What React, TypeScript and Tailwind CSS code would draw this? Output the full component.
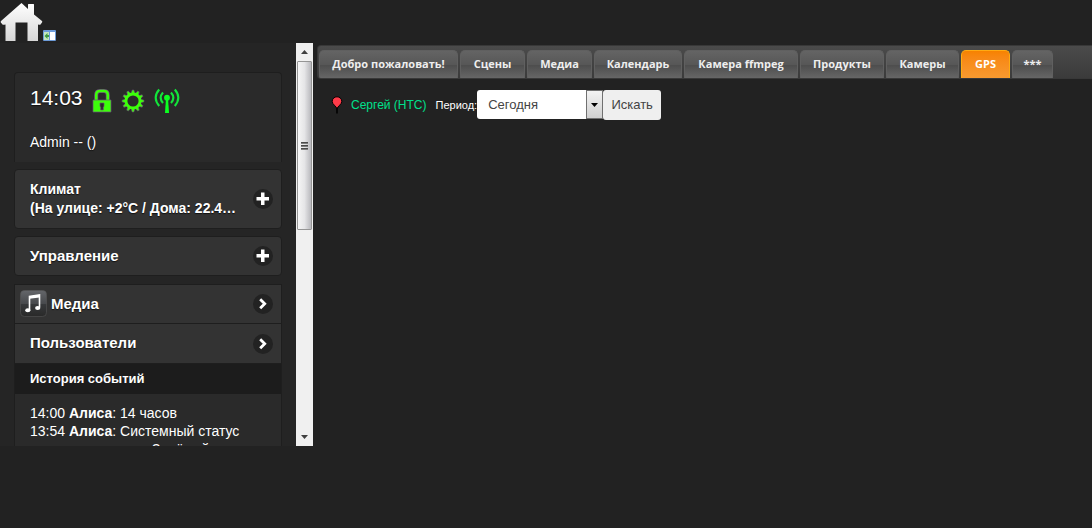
import React, { useState } from "react";

function HomeIcon() {
  return (
    <svg width="43" height="43" viewBox="0 0 43 43" aria-hidden="true">
      <defs>
        <linearGradient id="home" x1="0" y1="0" x2="0" y2="1">
          <stop offset="0" stopColor="#ffffff" />
          <stop offset="1" stopColor="#d6d6d6" />
        </linearGradient>
      </defs>
      <path d="M21.5 3 L28 9 V4.5 Q28 4 28.5 4 H33.5 Q34 4 34 4.5 V14.5 L42 21 Q42.6 21.7 42 22.5 L40.5 24.6 Q40 25 38 24.5 V41 H27.5 V22.5 H15.5 V41 H5.5 V24.5 Q3 25 2.5 24.6 L.8 22.5 Q.4 21.7 1 21 Z" fill="url(#home)" />
    </svg>
  );
}

function PanelIcon() {
  return (
    <svg width="13" height="11" viewBox="0 0 13 11" aria-hidden="true">
      <rect width="13" height="11" rx="1" fill="#6d9bd8" />
      <rect x="1" y="2" width="5" height="8" fill="#c4e6bd" />
      <rect x="7" y="2" width="5" height="8" fill="#fff" />
      <path d="M1.5 6 L4.5 3 V5 H6 V7 H4.5 V9 Z" fill="#3f9b43" />
    </svg>
  );
}

function LockIcon() {
  return (
    <svg width="20" height="24" viewBox="0 0 20 24" aria-hidden="true">
      <path d="M4.2 12 V6 Q4.2 2 8 2 H12 Q15.8 2 15.8 6 V12" fill="none" stroke="#6b4d78" strokeWidth="4" />
      <path d="M4.2 12 V6 Q4.2 2 8 2 H12 Q15.8 2 15.8 6 V12" fill="none" stroke="#3cff0a" strokeWidth="2.6" />
      <path d="M1 11 H19 V23 H1 Z M8 14 V17.5 L8.7 18 V21 H11.3 V18 L12 17.5 V14 Z" fill="#3cff0a" fillRule="evenodd" stroke="#6b4d78" strokeWidth=".7" />
    </svg>
  );
}

function GearIcon() {
  const teeth = Array.from({ length: 12 }, (_, i) => i * 30);
  return (
    <svg width="24" height="24" viewBox="0 0 24 24" aria-hidden="true">
      {teeth.map((a) => (
        <path key={a} d="M10 5 L11.2 1 H12.8 L14 5 Z" fill="#3cff0a" stroke="#6b4d78" strokeWidth=".6" transform={`rotate(${a} 12 12)`} />
      ))}
      <circle cx="12" cy="12" r="7" fill="none" stroke="#3cff0a" strokeWidth="2.8" />
    </svg>
  );
}

function AntennaIcon() {
  return (
    <svg width="26" height="26" viewBox="0 0 26 26" fill="none" stroke="#12e63a" strokeWidth="2.1" aria-hidden="true">
      <path d="M5.2 1.5 Q-1.8 9.5 5.2 18 M9 4.5 Q4.3 9.8 9 15 M20.8 1.5 Q27.8 9.5 20.8 18 M17 4.5 Q21.7 9.8 17 15" />
      <circle cx="13" cy="9.7" r="2.9" fill="#0cff20" stroke="none" />
      <path d="M12 10 H14 L15 25 H11 Z" fill="#0cff20" stroke="none" />
    </svg>
  );
}

function RoundIcon({ kind }: { kind: "plus" | "arrow" }) {
  return (
    <svg className="shrink-0" width="20" height="20" viewBox="0 0 20 20" aria-hidden="true">
      <circle cx="10" cy="10" r="10" fill="#222" />
      {kind === "plus" ? (
        <path d="M8 3.5 H11.5 V8 H16 V11.5 H11.5 V16 H8 V11.5 H3.5 V8 H8 Z" fill="#fff" />
      ) : (
        <path d="M7.2 5.3 L11.7 9.8 L7.2 14.3" fill="none" stroke="#fff" strokeWidth="2.8" />
      )}
    </svg>
  );
}

function MusicIcon() {
  return (
    <svg width="27" height="28" viewBox="0 0 27 28" aria-hidden="true">
      <defs>
        <linearGradient id="music" x1="0" y1="0" x2="0" y2="1">
          <stop offset="0" stopColor="#64666a" />
          <stop offset=".5" stopColor="#484a4d" />
          <stop offset=".52" stopColor="#37393b" />
          <stop offset="1" stopColor="#292929" />
        </linearGradient>
      </defs>
      <rect x=".5" y=".5" width="26" height="26" rx="4" fill="url(#music)" stroke="#555" strokeWidth=".6" />
      <path d="M9.5 20 V6.5 L19.5 5 V17.5" fill="none" stroke="#fff" strokeWidth="1.6" />
      <path d="M9.5 6.2 L19.5 4.8 V7.4 L9.5 8.8 Z" fill="#fff" />
      <ellipse cx="7.8" cy="20.2" rx="2.6" ry="2" fill="#fff" />
      <ellipse cx="17.7" cy="18" rx="2.6" ry="2" fill="#fff" />
    </svg>
  );
}

function PinIcon() {
  return (
    <svg width="12" height="18" viewBox="0 0 12 18" aria-hidden="true">
      <path d="M6 17.5 V10" stroke="#000" strokeWidth="1.6" />
      <path d="M6 13 C5.4 10 1.2 8.5 1.2 5.4 A4.8 4.6 0 0 1 10.8 5.4 C10.8 8.5 6.6 10 6 13 Z" fill="#ff3b49" stroke="#000" strokeWidth="1" />
    </svg>
  );
}

function ScrollArrow({ up = false }: { up?: boolean }) {
  return (
    <span className="flex h-[18px] shrink-0 items-center justify-center">
      <svg width="7" height="4" viewBox="0 0 7 4" aria-hidden="true">
        <path d={up ? "M0 4 L3.5 0 L7 4 Z" : "M0 0 L3.5 4 L7 0 Z"} fill="#404040" />
      </svg>
    </span>
  );
}

function Scrollbar() {
  return (
    <div className="flex w-[17px] shrink-0 flex-col bg-[#f0f0f0]" aria-hidden="true">
      <ScrollArrow up />
      <div className="mx-px flex h-[169px] flex-col items-center justify-center gap-px rounded-[1px] border border-[#959595] bg-linear-to-r from-[#f5f5f5] via-[#e5e5e7] to-[#b9b9bd]">
        <span className="h-0.5 w-[7px] bg-linear-to-b from-[#333] to-[#999]" />
        <span className="h-0.5 w-[7px] bg-linear-to-b from-[#333] to-[#999]" />
        <span className="h-0.5 w-[7px] bg-linear-to-b from-[#333] to-[#999]" />
      </div>
      <div className="grow" />
      <ScrollArrow />
    </div>
  );
}

const tabs = [
  { label: "Добро пожаловать!", width: "w-[139px]" },
  { label: "Сцены", width: "w-[65px]" },
  { label: "Медиа", width: "w-[65px]" },
  { label: "Календарь", width: "w-[88px]" },
  { label: "Камера ffmpeg", width: "w-[114px]" },
  { label: "Продукты", width: "w-[84px]" },
  { label: "Камеры", width: "w-[73px]" },
  { label: "GPS", width: "w-[49px]" },
  { label: "***", width: "w-[41px]" },
];

const rowText = "text-left leading-[19px] font-bold text-white [text-shadow:0_1px_1px_#111]";

function Sidebar() {
  return (
    <aside className="h-[403px] min-w-0 flex-1 overflow-hidden bg-[#252525] px-[14px] pt-[29px] text-white">
      <section className="h-[90px] rounded-t-[4px] border border-b-0 border-[#1e1e1e] bg-[#2a2a2a] px-[15px] pt-3 [text-shadow:0_1px_1px_#111]">
        <div className="flex h-[30px] items-start">
          <time className="text-[21px] leading-[26px]">14:03</time>
          <div className="flex items-center gap-[9px] pt-[3px] pl-[9px]">
            <LockIcon />
            <GearIcon />
            <AntennaIcon />
          </div>
        </div>
        <p className="mt-[18px] text-sm leading-[18px]">Admin -- ()</p>
      </section>

      <button type="button" className="mt-[7px] flex h-[60px] w-full items-center justify-between rounded-[4px] border border-[#1e1e1e] bg-[#333] pr-2 pl-[15px]">
        <span className={`${rowText} w-[214px] text-sm`}>
          <span className="block leading-[19px]">Климат</span>
          <span className="block leading-[19px] whitespace-nowrap">(На улице: +2°C / Дома: 22.4…</span>
        </span>
        <RoundIcon kind="plus" />
      </button>

      <button type="button" className="mt-[7px] flex h-10 w-full items-center justify-between rounded-[4px] border border-[#1e1e1e] bg-[#333] pr-2 pl-[15px]">
        <span className={`${rowText} pb-0.5 text-[15px]`}>Управление</span>
        <RoundIcon kind="plus" />
      </button>

      <nav className="mt-2">
        <a href="#media" className="flex h-10 items-center justify-between border border-[#1e1e1e] bg-[#333] pr-2 pl-[5px]">
          <span className="flex items-center gap-1">
            <MusicIcon />
            <span className={`${rowText} pb-0.5 text-[15px]`}>Медиа</span>
          </span>
          <RoundIcon kind="arrow" />
        </a>
        <a href="#users" className="flex h-10 items-center justify-between border border-t-0 border-[#1e1e1e] bg-[#333] pr-2 pl-[15px]">
          <span className={`${rowText} pb-0.5 text-[15px]`}>Пользователи</span>
          <RoundIcon kind="arrow" />
        </a>
      </nav>

      <section className="border-x border-[#1e1e1e] bg-[#2a2a2a]">
        <h2 className="bg-[#1c1c1c] px-[15px] py-[6px] text-[13px] leading-[18px] font-bold">История событий</h2>
        <ul className="px-[15px] pt-[10px] text-sm leading-[18px]">
          <li>14:00 <b>Алиса</b>: 14 часов</li>
          <li>13:54 <b>Алиса</b>: Системный статус</li>
          <li className="pl-[122px]">Зелёный</li>
        </ul>
      </section>
    </aside>
  );
}

export default function App() {
  const [active, setActive] = useState("GPS");
  return (
    <div className="min-h-screen bg-[#222] font-['Liberation_Sans',Arial,sans-serif]">
      <header className="flex h-[43px] items-end">
        <a href="#home" aria-label="Home"><HomeIcon /></a>
        <a href="#panel" aria-label="Panel" className="pb-0.5"><PanelIcon /></a>
      </header>
      <div className="flex items-start">
        <div className="flex w-[313px] shrink-0">
          <Sidebar />
          <Scrollbar />
        </div>
        <main className="min-w-0 flex-1 pt-0.5 pl-1">
          <nav className="flex h-[34px] items-end gap-0.5 overflow-hidden rounded-l-[4px] border border-r-0 border-[#383838] bg-linear-to-b from-[#4b4b4b] to-[#3b3b3b] pl-px font-['Open_Sans','Noto_Sans',sans-serif]">
            {tabs.map((tab) => (
              <button
                key={tab.label}
                type="button"
                onClick={() => setActive(tab.label)}
                className={`${tab.width} h-7 shrink-0 rounded-t-[5px] border border-b-0 text-center text-[11px] font-bold whitespace-nowrap ${
                  active === tab.label
                    ? "border-[#ffab13] bg-linear-to-b from-[#f78200] to-[#f89a30] text-white"
                    : "border-[#606060] bg-[linear-gradient(#646464,#575757_50%,#4c4c4c_50%,#666)] text-[#eee]"
                }`}
              >
                {tab.label}
              </button>
            ))}
          </nav>
          <form className="mt-[11px] flex h-[30px] items-center pl-[14px]" onSubmit={(e) => e.preventDefault()}>
            <PinIcon />
            <a href="#sergey" className="ml-2 text-xs text-[#00e08c]">Сергей (HTC)</a>
            <label htmlFor="period" className="ml-[9px] text-[11px] text-white">Период:</label>
            <span className="relative flex self-start">
              <select id="period" className="h-[29px] w-[126px] appearance-none rounded-[3px] bg-white pl-[11px] text-[13px] text-[#444]">
                <option>Сегодня</option>
                <option>Вчера</option>
              </select>
              <span className="pointer-events-none absolute inset-y-0 right-0 flex w-[17px] items-center justify-center border border-[#707070] bg-linear-to-b from-[#f3f3f3] to-[#d0d0d0]">
                <svg width="7" height="4" viewBox="0 0 7 4" aria-hidden="true"><path d="M0 0 H7 L3.5 4 Z" fill="#000" /></svg>
              </span>
            </span>
            <button type="submit" className="h-[30px] w-[58px] rounded-[3px] bg-[#efefef] text-[13px] text-[#444]">Искать</button>
          </form>
        </main>
      </div>
    </div>
  );
}
